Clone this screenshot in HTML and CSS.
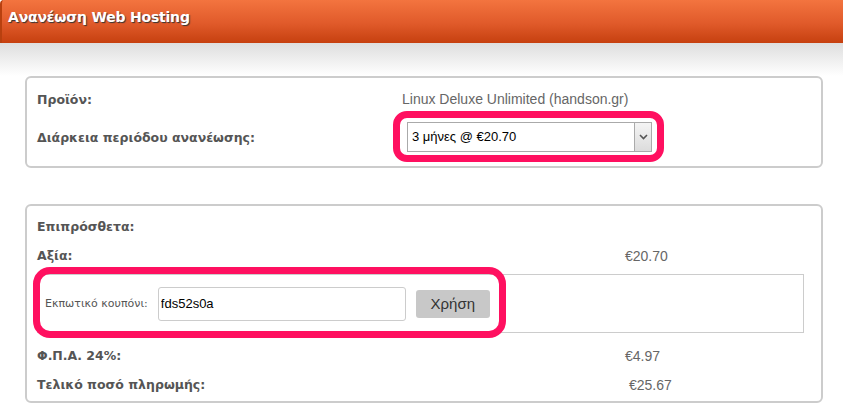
FILE: index.html
```html
<!DOCTYPE html>
<html lang="el">
<head>
  <meta charset="UTF-8">
  <title>Ανανέωση Web Hosting</title>
  <link rel="stylesheet" href="styles.css">
</head>
<body>

  <div class="header">
    <h1>Ανανέωση Web Hosting</h1>
  </div>

  <div class="content">
    <div class="box box-product">
      <div class="row">
        <span class="label">Προϊόν:</span>
        <span class="value">Linux Deluxe Unlimited (handson.gr)</span>
      </div>
      <div class="row row-cycle">
        <span class="label">Διάρκεια περιόδου ανανέωσης:</span>
        <span class="value">
          <span class="mark mark-select">
            <span class="select">
              <span class="select-text">3 μήνες @ €20.70</span>
              <span class="select-arrow">
                <svg width="9" height="6" viewBox="0 0 9 6"><path d="M1 1l3.5 3.5L8 1" fill="none" stroke="#555" stroke-width="1.6"/></svg>
              </span>
            </span>
          </span>
        </span>
      </div>
    </div>

    <div class="box box-totals">
      <div class="row">
        <span class="label">Επιπρόσθετα:</span>
      </div>
      <div class="row">
        <span class="label">Αξία:</span>
        <span class="value">€20.70</span>
      </div>
      <div class="coupon">
        <span class="mark mark-coupon">
          <span class="coupon-label">Εκπωτικό κουπόνι:</span>
          <input type="text" class="coupon-input" value="fds52s0a">
          <button class="coupon-btn">Χρήση</button>
        </span>
      </div>
      <div class="row">
        <span class="label">Φ.Π.Α. 24%:</span>
        <span class="value">€4.97</span>
      </div>
      <div class="row">
        <span class="label">Τελικό ποσό πληρωμής:</span>
        <span class="value value-total">€25.67</span>
      </div>
    </div>
  </div>

</body>
</html>
```

FILE: styles.css
```css
body {
  margin: 0;
  background: #fff;
  font-family: "Liberation Sans", Arial, sans-serif;
}
.header {
  height: 43px;
  background: linear-gradient(to bottom, #f3743f, #e05a2a 55%, #c6400f);
  border-left: 2px solid #b8400f;
  border-top-left-radius: 4px;
  box-sizing: border-box;
}
.header h1 {
  margin: 0;
  padding: 9px 0 0 6px;
  font-family: "DejaVu Sans", Verdana, sans-serif;
  font-size: 14px;
  font-weight: bold;
  color: #fff;
  text-shadow: 1px 1px 1px #333;
  letter-spacing: -0.2px;
}
.content {
  padding: 33px 20px 0 25px;
  background: linear-gradient(to bottom, #dedede, #fff 33px) no-repeat;
}
.box {
  border: 2px solid #ccc;
  border-radius: 6px;
  background: #fff;
}
.box-product {
  padding: 7px 0 5px;
}
.box-totals {
  margin-top: 36px;
  padding: 6px 0 2px;
}
.row {
  display: flex;
  align-items: center;
  height: 29px;
  padding-left: 10px;
}
.box-product .row {
  height: 28px;
}
.box-product .row-cycle {
  height: 48px;
}
.label {
  font-family: "DejaVu Sans", Verdana, sans-serif;
  font-size: 12.5px;
  font-weight: bold;
  color: #555;
}
.value {
  font-size: 14px;
  color: #666;
}
.box-product .label {
  width: 365px;
}
.box-totals .label {
  width: 588px;
}
.value-total {
  margin-left: 4px;
}
.mark {
  position: relative;
  display: inline-flex;
  align-items: center;
}
.mark::after {
  content: "";
  position: absolute;
  border: 7px solid #ff1060;
  pointer-events: none;
}
.mark-select {
  margin-left: 5px;
}
.mark-select::after {
  top: -11px;
  right: -12px;
  bottom: -10px;
  left: -14px;
  border-radius: 14px;
}
.select {
  display: flex;
  width: 245px;
  height: 30px;
  box-sizing: border-box;
  border: 1px solid #aaa;
  background: #fff;
}
.select-text {
  flex: 1;
  padding-left: 4px;
  line-height: 28px;
  font-size: 13px;
  color: #000;
}
.select-arrow {
  width: 16px;
  display: flex;
  align-items: center;
  justify-content: center;
  border-left: 1px solid #aaa;
  background: linear-gradient(to bottom, #f4f4f4, #dcdcdc);
}
.coupon {
  display: flex;
  align-items: center;
  height: 57px;
  margin: 4px 17px 8px 10px;
  border: 1px solid #ccc;
  padding-left: 7px;
}
.mark-coupon::after {
  top: -20px;
  right: -16px;
  bottom: -17px;
  left: -12px;
  border-radius: 17px;
}
.coupon-label {
  font-family: "DejaVu Sans", Tahoma, sans-serif;
  font-size: 11px;
  color: #555;
  margin-right: 10px;
}
.coupon-input {
  width: 248px;
  height: 34px;
  box-sizing: border-box;
  border: 1px solid #ccc;
  border-radius: 3px;
  padding: 0 2px;
  font-family: "Liberation Sans", Arial, sans-serif;
  font-size: 13px;
  color: #000;
}
.coupon-btn {
  margin-left: 10px;
  width: 74px;
  height: 28px;
  border: none;
  border-radius: 3px;
  background: #c8c8c8;
  font-family: "Liberation Sans", Arial, sans-serif;
  font-size: 15px;
  color: #333;
}
```
